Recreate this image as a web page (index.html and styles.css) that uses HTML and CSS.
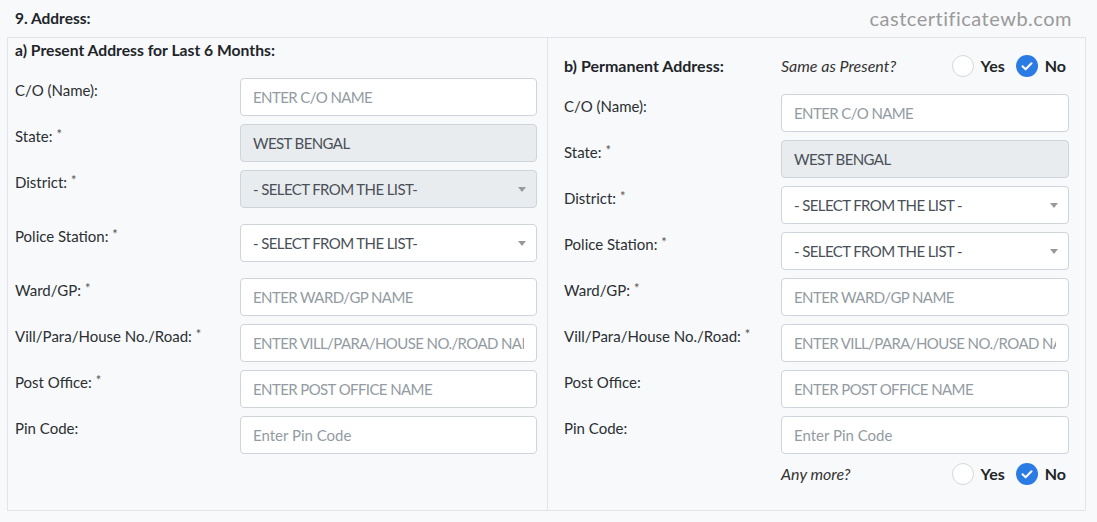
FILE: index.html
```html
<!DOCTYPE html>
<html lang="en">
<head>
<meta charset="utf-8">
<title>Address</title>
<link rel="stylesheet" href="styles.css">
</head>
<body>
<div class="page">
  <div class="head">
    <div class="title">9. Address:</div>
    <div class="watermark">castcertificatewb.com</div>
  </div>
  <div class="box">
    <div class="col col-left">
      <div class="col-title">a) Present Address for Last 6 Months:</div>
      <div class="row">
        <label class="lbl">C/O (Name):</label>
        <input class="ctl" type="text" placeholder="ENTER C/O NAME">
      </div>
      <div class="row">
        <label class="lbl">State: <span class="req">*</span></label>
        <input class="ctl ctl-disabled" type="text" value="WEST BENGAL" disabled>
      </div>
      <div class="row row-select">
        <label class="lbl">District: <span class="req">*</span></label>
        <div class="sel-wrap">
          <select class="ctl sel ctl-disabled" disabled><option>- SELECT FROM THE LIST-</option></select>
          <span class="caret"></span>
        </div>
      </div>
      <div class="row row-select">
        <label class="lbl">Police Station: <span class="req">*</span></label>
        <div class="sel-wrap">
          <select class="ctl sel"><option>- SELECT FROM THE LIST-</option></select>
          <span class="caret"></span>
        </div>
      </div>
      <div class="row">
        <label class="lbl">Ward/GP: <span class="req">*</span></label>
        <input class="ctl" type="text" placeholder="ENTER WARD/GP NAME">
      </div>
      <div class="row">
        <label class="lbl">Vill/Para/House No./Road: <span class="req">*</span></label>
        <input class="ctl" type="text" placeholder="ENTER VILL/PARA/HOUSE NO./ROAD NAME">
      </div>
      <div class="row">
        <label class="lbl">Post Office: <span class="req">*</span></label>
        <input class="ctl" type="text" placeholder="ENTER POST OFFICE NAME">
      </div>
      <div class="row">
        <label class="lbl">Pin Code:</label>
        <input class="ctl ctl-mixed" type="text" placeholder="Enter Pin Code">
      </div>
    </div>
    <div class="col col-right">
      <div class="row row-head">
        <div class="col-title">b) Permanent Address:</div>
        <div class="choice">
          <span class="question">Same as Present?</span>
          <span class="opts">
            <span class="radio"></span><span class="opt">Yes</span>
            <svg class="check" viewBox="0 0 22 22" width="22" height="22"><circle cx="11" cy="11" r="11" fill="#2b7be5"/><polyline points="6.5,11.2 9.6,14.2 15.5,8.3" fill="none" stroke="#fff" stroke-width="2" stroke-linecap="round" stroke-linejoin="round"/></svg><span class="opt">No</span>
          </span>
        </div>
      </div>
      <div class="row">
        <label class="lbl">C/O (Name):</label>
        <input class="ctl" type="text" placeholder="ENTER C/O NAME">
      </div>
      <div class="row">
        <label class="lbl">State: <span class="req">*</span></label>
        <input class="ctl ctl-disabled" type="text" value="WEST BENGAL" disabled>
      </div>
      <div class="row">
        <label class="lbl">District: <span class="req">*</span></label>
        <div class="sel-wrap">
          <select class="ctl sel"><option>- SELECT FROM THE LIST -</option></select>
          <span class="caret"></span>
        </div>
      </div>
      <div class="row">
        <label class="lbl">Police Station: <span class="req">*</span></label>
        <div class="sel-wrap">
          <select class="ctl sel"><option>- SELECT FROM THE LIST -</option></select>
          <span class="caret"></span>
        </div>
      </div>
      <div class="row">
        <label class="lbl">Ward/GP: <span class="req">*</span></label>
        <input class="ctl" type="text" placeholder="ENTER WARD/GP NAME">
      </div>
      <div class="row">
        <label class="lbl">Vill/Para/House No./Road: <span class="req">*</span></label>
        <input class="ctl" type="text" placeholder="ENTER VILL/PARA/HOUSE NO./ROAD NAME">
      </div>
      <div class="row">
        <label class="lbl">Post Office:</label>
        <input class="ctl" type="text" placeholder="ENTER POST OFFICE NAME">
      </div>
      <div class="row">
        <label class="lbl">Pin Code:</label>
        <input class="ctl ctl-mixed" type="text" placeholder="Enter Pin Code">
      </div>
      <div class="row row-more">
        <span></span>
        <div class="choice">
          <span class="question">Any more?</span>
          <span class="opts">
            <span class="radio"></span><span class="opt">Yes</span>
            <svg class="check" viewBox="0 0 22 22" width="22" height="22"><circle cx="11" cy="11" r="11" fill="#2b7be5"/><polyline points="6.5,11.2 9.6,14.2 15.5,8.3" fill="none" stroke="#fff" stroke-width="2" stroke-linecap="round" stroke-linejoin="round"/></svg><span class="opt">No</span>
          </span>
        </div>
      </div>
    </div>
  </div>
</div>
</body>
</html>
```

FILE: styles.css
```css
* { box-sizing: border-box; }
html, body {
  margin: 0;
  padding: 0;
  background: #f8f9fa;
}
body {
  font-family: Lato, "Open Sans", sans-serif;
  font-size: 16px;
  line-height: 24px;
  color: #212529;
}
.page {
  padding: 6px 11px 0 7px;
  width: 1097px;
}
.head {
  display: flex;
  justify-content: space-between;
  align-items: center;
  height: 24px;
  margin-bottom: 7px;
  padding-left: 8px;
  padding-right: 14px;
}
.title {
  font-weight: 700;
  font-size: 15.5px;
}
.watermark {
  font-size: 20px;
  color: #9a9a9a;
  letter-spacing: 0.5px;
}
.box {
  display: grid;
  grid-template-columns: 539px 538px;
  width: 1079px;
  height: 474px;
  border: 1px solid #e1e4e8;
}
.col-left {
  padding: 0 9px 0 7px;
}
.col-right {
  border-left: 1px solid #e1e4e8;
  padding: 16px 15px 0 16px;
}
.col-title {
  font-weight: 700;
  font-size: 15.7px;
  height: 24px;
}
.col-right .col-title {
  font-size: 16px;
}
.col-left .col-title {
  margin-bottom: 16px;
}
.row {
  display: grid;
  align-items: start;
  margin-bottom: 8px;
}
.col-left .row { grid-template-columns: 225px 297px; }
.col-right .row { grid-template-columns: 217px 288px; }
.row-select { margin-bottom: 16px; }
.row-head { margin-bottom: 16px; }
.lbl {
  display: block;
  font-size: 15px;
  line-height: 24px;
  color: #2b2f33;
}
.req {
  font-size: 13px;
  color: #555;
  vertical-align: top;
  position: relative;
  top: -2px;
}
.ctl {
  display: block;
  width: 100%;
  height: 38px;
  padding: 6px 12px;
  font-family: inherit;
  font-size: 15px;
  letter-spacing: -0.6px;
  line-height: 24px;
  color: #495057;
  background: #fff;
  border: 1px solid #ced4da;
  border-radius: 4px;
  outline: none;
  margin: 0;
}
.ctl-mixed {
  letter-spacing: 0;
}
.ctl::placeholder {
  color: #939ba2;
  opacity: 1;
}
.ctl-disabled, .ctl:disabled {
  background: #e9ecef;
  color: #495057;
  opacity: 1;
}
.sel-wrap {
  position: relative;
}
.sel {
  -webkit-appearance: none;
  appearance: none;
  padding-right: 30px;
}
.caret {
  position: absolute;
  right: 11px;
  top: 17px;
  width: 0;
  height: 0;
  border-left: 4px solid transparent;
  border-right: 4px solid transparent;
  border-top: 5px solid #999;
}
.choice {
  display: flex;
  justify-content: space-between;
  align-items: center;
  height: 24px;
  padding-right: 3px;
}
.question {
  font-style: italic;
  color: #333;
}
.opts {
  display: flex;
  align-items: center;
}
.radio {
  width: 22px;
  height: 22px;
  border-radius: 50%;
  background: #fff;
  border: 1px solid #d6d8db;
}
.check {
  display: block;
  margin-left: 11px;
}
.opt {
  font-weight: 700;
  margin-left: 7px;
}
```
